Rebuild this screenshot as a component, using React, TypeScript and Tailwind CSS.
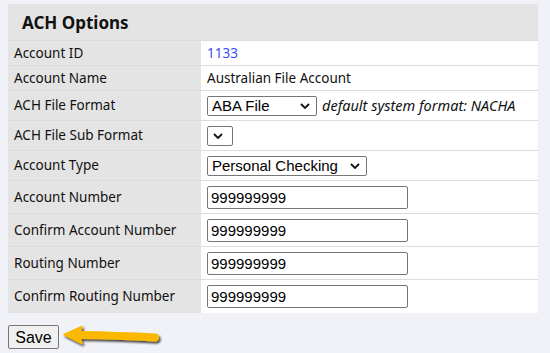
import React from 'react';

const labelFont = { fontFamily: '"Noto Sans", "Open Sans", sans-serif' };
const arial = { fontFamily: '"Liberation Sans", Arial, sans-serif' };

function Chevron() {
    return (
        <svg width="10" height="6" viewBox="0 0 10 6" className="pointer-events-none absolute right-[7px] top-1/2 -translate-y-1/2">
            <path d="M1 1 L5 5 L9 1" fill="none" stroke="#111" strokeWidth="1.8" />
        </svg>
    );
}

function Select({ value, width }: { value: string; width: string }) {
    return (
        <div className={`relative ${width} h-[20px]`}>
            <select
                defaultValue={value}
                className="block h-full w-full appearance-none rounded-[2px] border border-[#767676] bg-white py-0 pl-[4px] pr-[20px] text-[15px] leading-[18px] text-black"
                style={arial}
            >
                <option value={value}>{value}</option>
            </select>
            <Chevron />
        </div>
    );
}

function TextInput({ value }: { value: string }) {
    return (
        <input
            defaultValue={value}
            className="block h-[23px] w-[201px] rounded-[2px] border border-[#767676] bg-white px-[3px] text-[15px] text-black"
            style={arial}
        />
    );
}

const rows: { label: string; h: string; value: React.ReactNode }[] = [
    { label: 'Account ID', h: 'h-[25px]', value: <span className="text-[13.5px] text-[#3b4ef5]">1133</span> },
    { label: 'Account Name', h: 'h-[25px]', value: <span className="text-[13.5px]">Australian File Account</span> },
    {
        label: 'ACH File Format',
        h: 'h-[30px]',
        value: (
            <div className="flex items-center gap-[5px]">
                <Select value="ABA File" width="w-[110px]" />
                <span className="text-[14.5px] italic">default system format: NACHA</span>
            </div>
        ),
    },
    { label: 'ACH File Sub Format', h: 'h-[30px]', value: <Select value="" width="w-[23px]" /> },
    { label: 'Account Type', h: 'h-[30px]', value: <Select value="Personal Checking" width="w-[160px]" /> },
    { label: 'Account Number', h: 'h-[33px]', value: <TextInput value="999999999" /> },
    { label: 'Confirm Account Number', h: 'h-[33px]', value: <TextInput value="999999999" /> },
    { label: 'Routing Number', h: 'h-[33px]', value: <TextInput value="999999999" /> },
    { label: 'Confirm Routing Number', h: 'h-[34px]', value: <TextInput value="999999999" /> },
];

export default function App() {
    return (
        <main className="min-h-[353px] bg-[#f0f2f7] px-[8px] pt-[4px] text-[#111]" style={labelFont}>
            {/* panel */}
            <section className="w-[530px]">
                <header className="flex h-[36px] items-center bg-[#e4e4e4] pl-[14px] pt-[1px]">
                    <h1 className="text-[17px] font-bold">ACH Options</h1>
                </header>

                {rows.map((row) => (
                    <div key={row.label} className={`flex ${row.h} border-t border-[#dcdcdc]`}>
                        <div className="flex w-[193px] items-center bg-[#e4e4e4] pl-[6px] text-[13.5px]">
                            {row.label}
                        </div>
                        <div className="flex flex-1 items-center bg-white pl-[6px]">{row.value}</div>
                    </div>
                ))}
            </section>

            {/* save + arrow */}
            <div className="mt-[10px] flex items-center">
                <button className="h-[24px] w-[51px] rounded-[2px] border border-[#767676] bg-[#f0f0f0] text-[16px] text-black" style={arial}>
                    Save
                </button>
                <svg width="104" height="28" viewBox="0 0 104 28" className="ml-[2px]">
                    <defs>
                        <filter id="sh" x="-10%" y="-40%" width="130%" height="200%">
                            <feDropShadow dx="1.5" dy="2" stdDeviation="1.1" floodColor="#000" floodOpacity="0.75" />
                        </filter>
                    </defs>
                    <g filter="url(#sh)">
                        <path d="M19 12 Q55 12.5 94 14.5" fill="none" stroke="#fbb800" strokeWidth="8" strokeLinecap="round" />
                        <path d="M3 11.5 L21 3.5 L18 12 L21 20.5 Z" fill="#fbb800" stroke="#fbb800" strokeWidth="1.5" strokeLinejoin="round" />
                    </g>
                </svg>
            </div>
        </main>
    );
}
